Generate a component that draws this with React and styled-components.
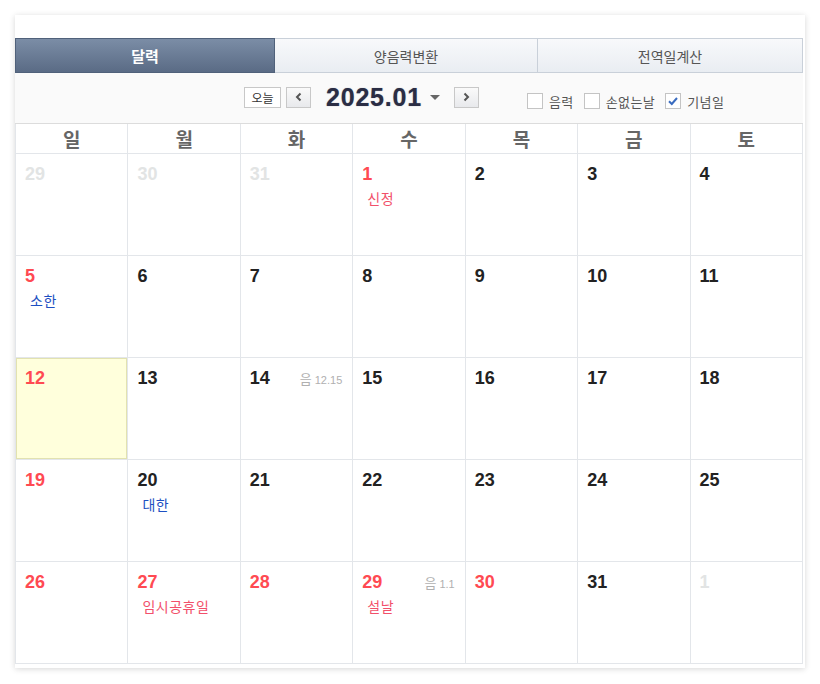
import styled, { createGlobalStyle, css } from "styled-components";

const GlobalStyle = createGlobalStyle`
  body {
    margin: 0;
    background: #ffffff;
    font-family: "Noto Sans CJK KR", "Noto Sans", sans-serif;
  }
`;

const Page = styled.div`
  padding: 15px;
`;

const Card = styled.div`
  width: 790px;
  box-sizing: border-box;
  background: #fff;
  padding: 23px 2px 4px 0;
  box-shadow: 0 1px 6px rgba(0, 0, 0, 0.16);
`;

const Tabs = styled.div`
  display: grid;
  grid-template-columns: 260px 263px 265px;
  height: 35px;
`;

const Tab = styled.div`
  display: flex;
  align-items: center;
  justify-content: center;
  box-sizing: border-box;
  font-size: 14px;
  color: #555;
  background: linear-gradient(#f8f9fb, #e9edf2);
  border: 1px solid #c9d0d9;
  border-left: none;
  ${(p) =>
    p.$active &&
    css`
      background: linear-gradient(#7b8da6, #5a6b85);
      border: 1px solid #50617a;
      color: #fff;
      font-weight: bold;
      font-size: 15px;
    `}
`;

const Toolbar = styled.div`
  height: 51px;
  box-sizing: border-box;
  background: #fafafa;
  border-bottom: 1px solid #dcdcdc;
  display: flex;
  align-items: center;
  padding: 0 0 0 229px;
`;

const Nav = styled.div`
  display: flex;
  align-items: center;
  margin-top: -2px;
`;

const SmallButton = styled.button`
  height: 21px;
  box-sizing: border-box;
  border: 1px solid #c8c8c8;
  background: ${(p) => (p.$arrow ? "linear-gradient(#fafafa, #e8e9ec)" : "#fff")};
  color: #333;
  font-family: "Noto Sans CJK KR", sans-serif;
  font-size: 12px;
  padding: 0;
  width: ${(p) => (p.$arrow ? "25px" : "37px")};
  display: flex;
  align-items: center;
  justify-content: center;
  margin-right: ${(p) => p.$mr || 0}px;
`;

const Title = styled.div`
  font-family: "Liberation Sans", Arial, sans-serif;
  font-weight: bold;
  font-size: 25px;
  letter-spacing: 0.8px;
  color: #2a2d44;
  text-shadow: 0 0 1px rgba(42, 45, 68, 0.5);
  margin: 0 8px 0 15px;
`;

const Caret = styled.span`
  width: 0;
  height: 0;
  border-left: 5px solid transparent;
  border-right: 5px solid transparent;
  border-top: 5px solid #666;
  margin-right: 14px;
`;

const Options = styled.div`
  display: flex;
  align-items: center;
  margin-left: 48px;
  margin-top: 6px;
  gap: 10px;
`;

const Option = styled.label`
  display: flex;
  align-items: center;
  gap: 6px;
  font-size: 13px;
  letter-spacing: 0.4px;
  color: #555;
`;

const Box = styled.span`
  width: 16px;
  height: 16px;
  box-sizing: border-box;
  border: 1px solid #c4c4c4;
  background: #fff;
  display: flex;
  align-items: center;
  justify-content: center;
`;

const Grid = styled.div`
  display: grid;
  grid-template-columns: repeat(7, 1fr);
  border-left: 1px solid #e3e6ea;
`;

const HeadCell = styled.div`
  height: 30px;
  box-sizing: border-box;
  border-right: 1px solid #e3e6ea;
  border-bottom: 1px solid #e3e6ea;
  display: flex;
  align-items: center;
  justify-content: center;
  font-size: 19px;
  font-weight: bold;
  color: #666;
`;

const Cell = styled.div`
  position: relative;
  height: 102px;
  box-sizing: border-box;
  border-right: 1px solid #e3e6ea;
  border-bottom: 1px solid #e3e6ea;
  padding: 9px 10px 0 9px;
  ${(p) =>
    p.$today &&
    css`
      background: #ffffdc;
      box-shadow: inset 0 0 0 1px #e2e2b0;
    `}
`;

const CellTop = styled.div`
  display: flex;
  justify-content: space-between;
  align-items: center;
`;

const DayNum = styled.span`
  font-family: "Liberation Sans", Arial, sans-serif;
  font-weight: bold;
  font-size: 18px;
  line-height: 22px;
  color: ${(p) => p.$color};
`;

const Lunar = styled.span`
  color: #b0b0b0;
  font-size: 13px;
  & b {
    font-family: "Liberation Sans", Arial, sans-serif;
    font-weight: normal;
    font-size: 11px;
    margin-left: 3px;
  }
`;

const Label = styled.div`
  margin: 3px 0 0 5px;
  font-size: 14px;
  letter-spacing: 0.5px;
  color: ${(p) => (p.$blue ? "#1d4fc2" : "#f2506a")};
`;

const RED = "#ff4a52";
const BLACK = "#222";
const FADED = "#e2e4e4";

const days = ["일", "월", "화", "수", "목", "금", "토"];

const cells = [
  { d: 29, c: FADED }, { d: 30, c: FADED }, { d: 31, c: FADED },
  { d: 1, c: RED, label: "신정" }, { d: 2 }, { d: 3 }, { d: 4 },
  { d: 5, c: RED, label: "소한", blue: true }, { d: 6 }, { d: 7 }, { d: 8 }, { d: 9 }, { d: 10 }, { d: 11 },
  { d: 12, c: RED, today: true }, { d: 13 }, { d: 14, lunar: "12.15" }, { d: 15 }, { d: 16 }, { d: 17 }, { d: 18 },
  { d: 19, c: RED }, { d: 20, label: "대한", blue: true }, { d: 21 }, { d: 22 }, { d: 23 }, { d: 24 }, { d: 25 },
  { d: 26, c: RED }, { d: 27, c: RED, label: "임시공휴일" }, { d: 28, c: RED },
  { d: 29, c: RED, label: "설날", lunar: "1.1" }, { d: 30, c: RED }, { d: 31 }, { d: 1, c: FADED },
];

const Check = () => (
  <svg width="12" height="12" viewBox="0 0 12 12">
    <path d="M2 6.2 L4.8 9 L10 3" fill="none" stroke="#3a6cc0" strokeWidth="2" />
  </svg>
);

export default function App() {
  return (
    <Page>
      <GlobalStyle />
      <Card>
        <Tabs>
          <Tab $active>달력</Tab>
          <Tab>양음력변환</Tab>
          <Tab>전역일계산</Tab>
        </Tabs>
        <Toolbar>
          <Nav>
            <SmallButton $mr={5}>오늘</SmallButton>
            <SmallButton $arrow>
              <svg width="10" height="10" viewBox="0 0 10 10">
                <path d="M6.5 1.5 L3 5 L6.5 8.5" fill="none" stroke="#555" strokeWidth="2" />
              </svg>
            </SmallButton>
            <Title>2025.01</Title>
            <Caret />
            <SmallButton $arrow>
              <svg width="10" height="10" viewBox="0 0 10 10">
                <path d="M3.5 1.5 L7 5 L3.5 8.5" fill="none" stroke="#555" strokeWidth="2" />
              </svg>
            </SmallButton>
          </Nav>
          <Options>
            <Option><Box />음력</Option>
            <Option><Box />손없는날</Option>
            <Option><Box><Check /></Box>기념일</Option>
          </Options>
        </Toolbar>
        <Grid>
          {days.map((d) => (
            <HeadCell key={d}>{d}</HeadCell>
          ))}
          {cells.map((c, i) => (
            <Cell key={i} $today={c.today}>
              <CellTop>
                <DayNum $color={c.c || BLACK}>{c.d}</DayNum>
                {c.lunar && (
                  <Lunar>
                    음<b>{c.lunar}</b>
                  </Lunar>
                )}
              </CellTop>
              {c.label && <Label $blue={c.blue}>{c.label}</Label>}
            </Cell>
          ))}
        </Grid>
      </Card>
    </Page>
  );
}
